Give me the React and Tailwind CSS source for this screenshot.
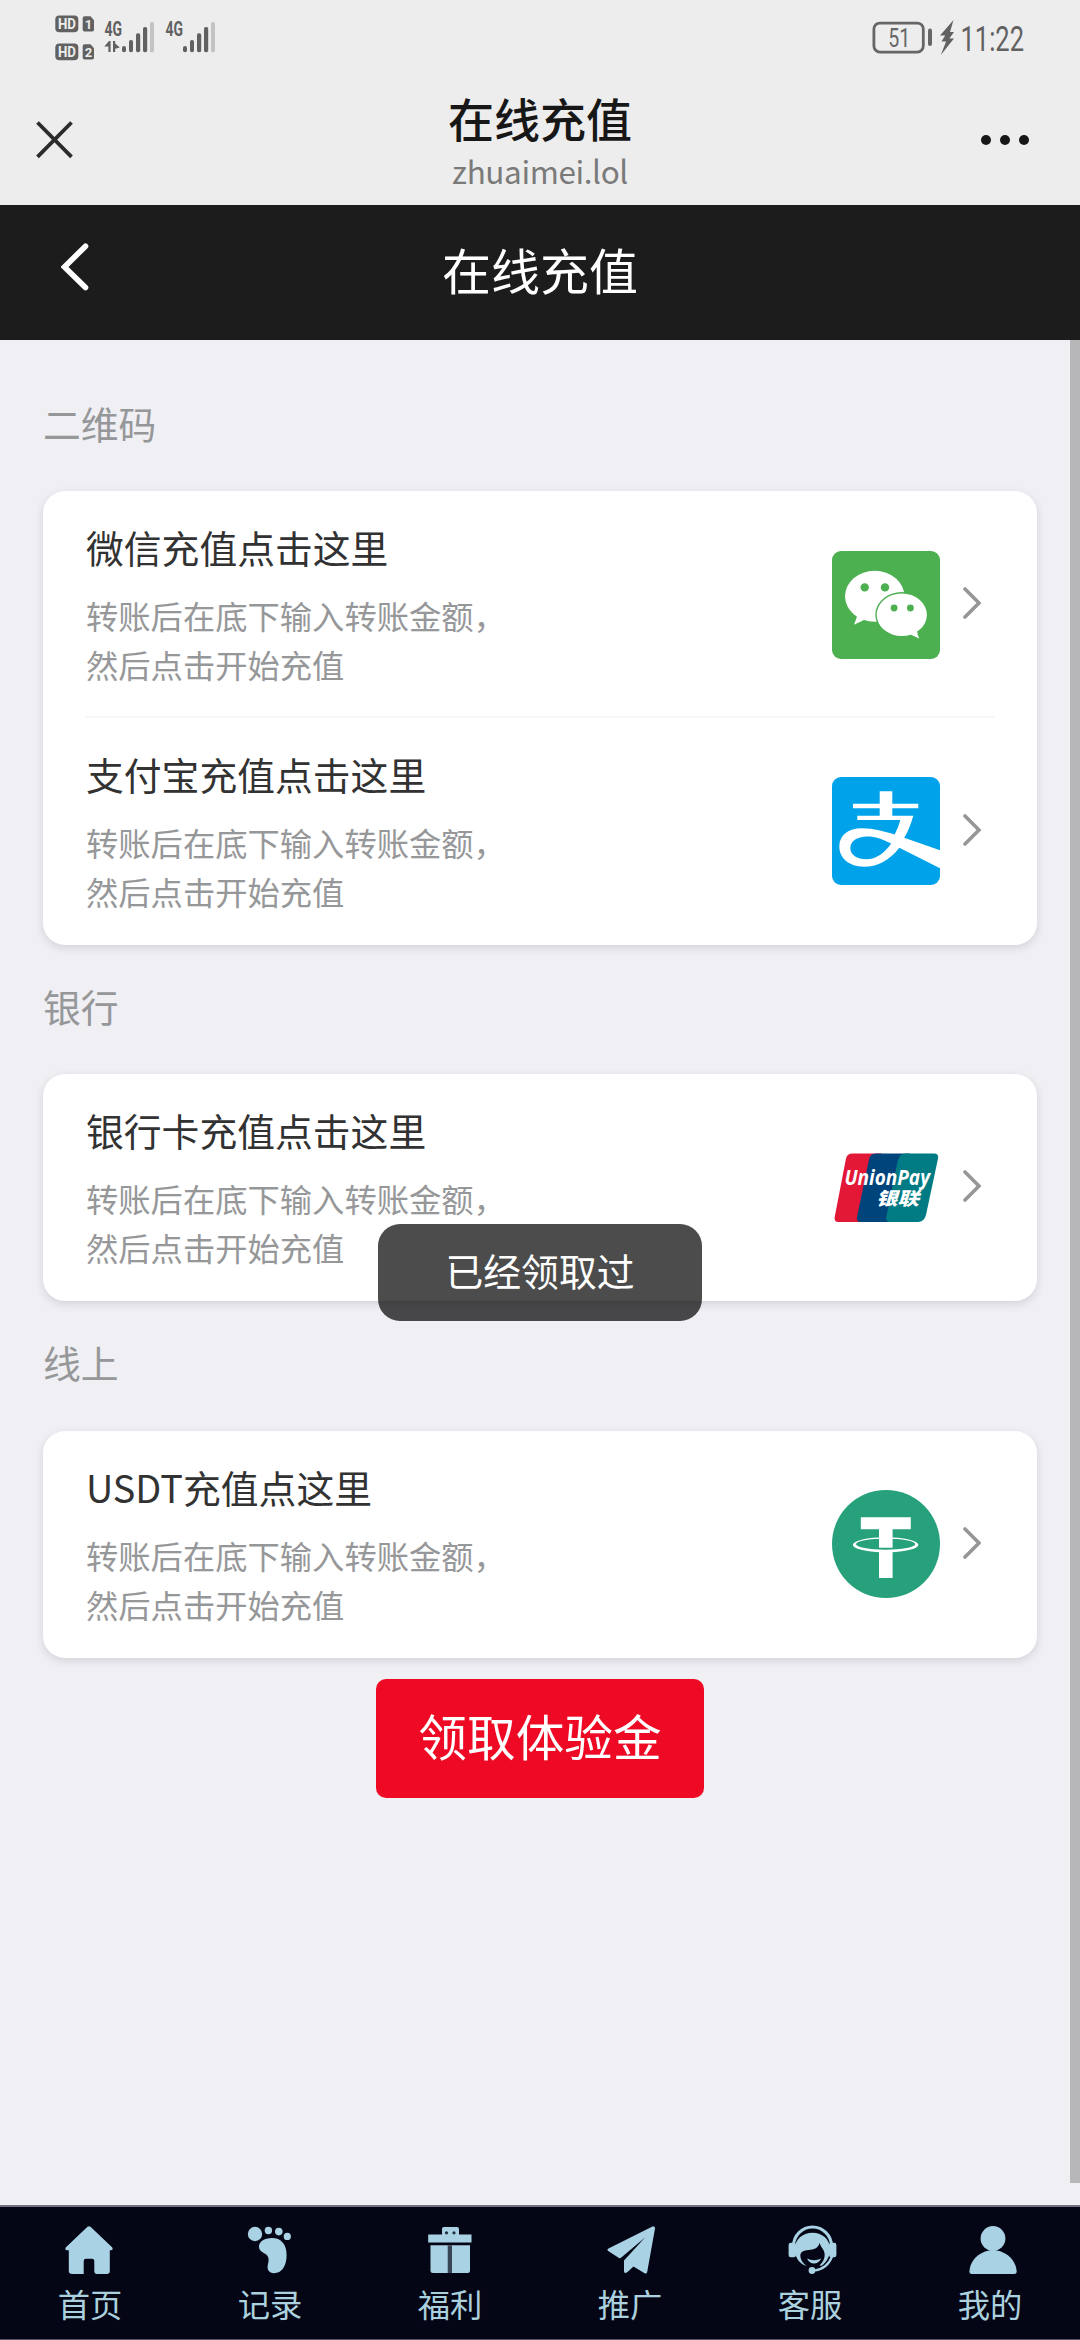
import React from "react";

const CJK = "font-['Noto_Sans_CJK_SC',sans-serif]";

function Signal({ data }) {
  return (
    <svg width="50" height="36" viewBox="0 0 50 36" className="block">
      <text x="0.5" y="17.5" fontSize="19.5" fontWeight="700" fontFamily="Roboto, sans-serif" fill="#616161" textLength="17.5" lengthAdjust="spacingAndGlyphs">4G</text>
      {data && (
        <path d="M6.6 23v11H4.4v-5.6H.3L5 23zM9 23h2.2v2.4l4.6 4-4.6 1.4V34H9z" fill="#616161" />
      )}
      <g fill="#616161">
        <rect x="18" y="28" width="4" height="6.3" rx="2" />
        <rect x="25" y="22" width="4" height="12.3" rx="1.8" />
        <rect x="32" y="15.3" width="4.2" height="19" rx="1.8" />
        <rect x="39" y="9" width="4.2" height="25.3" rx="1.8" />
        <rect x="46" y="4" width="4" height="30.3" rx="1.6" fill="#c3c3c3" />
      </g>
    </svg>
  );
}

function HdBadge({ n }) {
  return (
    <svg width="40" height="18" viewBox="0 0 40 18" className="block">
      <rect x="0.3" y="0.6" width="23" height="16.6" rx="4" fill="#616161" />
      <text x="3" y="14.3" fontSize="15" fontWeight="700" fontFamily="Roboto, sans-serif" fill="#ededed" textLength="18" lengthAdjust="spacingAndGlyphs">HD</text>
      <path d="M29.5 1.2h6l3.5 4v9.5a1.8 1.8 0 0 1-1.8 1.8h-7.7a1.8 1.8 0 0 1-1.8-1.8V3a1.8 1.8 0 0 1 1.8-1.8z" fill="#616161" />
      <text x="33.4" y="13.8" fontSize="13" fontWeight="700" textAnchor="middle" fontFamily="Roboto, sans-serif" fill="#ededed">{n}</text>
    </svg>
  );
}

function StatusBar() {
  return (
    <div className="flex h-[75px] items-start justify-between pl-[55px] pr-[50px]">
      <div className="flex">
        <div className="flex flex-col gap-[10px] pt-[15px]">
          <HdBadge n="1" />
          <HdBadge n="2" />
        </div>
        <div className="flex gap-[11px] pl-[9px] pt-[18px]">
          <Signal data />
          <Signal />
        </div>
      </div>
      <svg width="158" height="50" viewBox="0 0 158 50" className="mt-[17px] block overflow-visible">
        <rect x="1.9" y="6.1" width="49.4" height="29" rx="6" fill="none" stroke="#666" strokeWidth="2.8" />
        <rect x="56" y="11.5" width="4" height="17.5" rx="2" fill="#666" />
        <text x="16.3" y="30" fontSize="26" fontFamily="Roboto, sans-serif" fill="#666" textLength="22" lengthAdjust="spacingAndGlyphs">51</text>
        <path d="M81.5 3 68 18.5h5.2L69.5 24.5h4.6L68.8 38 82 21.5h-4.6L82 15h-4z" fill="#616161" />
        <text x="88.5" y="34.3" fontSize="35.5" fontFamily="Roboto, sans-serif" fill="#616161" textLength="63.5" lengthAdjust="spacingAndGlyphs">11:22</text>
      </svg>
    </div>
  );
}

function BrowserBar() {
  return (
    <div className="flex h-[130px] items-start justify-between pl-[36px] pr-[50px]">
      <svg width="38" height="38" viewBox="0 0 38 38" className="mt-[46px] block">
        <path d="M1.5 1.5 35.5 35.8M35.5 1.5 1.5 35.8" stroke="#2b2b2b" strokeWidth="3.8" />
      </svg>
      <div className="flex flex-col items-center pl-[26px]">
        <div className="mt-[15px] text-[46px] font-medium leading-[54px] text-[#171717]">在线充值</div>
        <div className="mt-[8px] text-[31.5px] leading-[36px] tracking-[-0.4px] text-[#7a7a7a]">zhuaimei.lol</div>
      </div>
      <svg width="50" height="12" viewBox="0 0 50 12" className="mt-[59px] block" fill="#171717">
        <circle cx="6" cy="6" r="5" />
        <circle cx="25" cy="6" r="5" />
        <circle cx="44" cy="6" r="5" />
      </svg>
    </div>
  );
}

function WechatIcon() {
  return (
    <svg width="108" height="108" viewBox="0 0 108 108" className="block">
      <rect width="108" height="108" rx="9" fill="#4caf50" />
      <g fill="#fff">
        <ellipse cx="42.7" cy="45.2" rx="29.7" ry="25.5" />
        <path d="M25.5 63Q24.5 68 22 73.8L32 69z" />
      </g>
      <ellipse cx="69.8" cy="63.8" rx="26.5" ry="22.8" fill="#4caf50" />
      <g fill="#fff">
        <ellipse cx="69.8" cy="63.8" rx="25.1" ry="21.3" />
        <path d="M85 79.5Q85.5 84 87.2 87.5L78.5 83.5z" />
      </g>
      <g fill="#4caf50">
        <circle cx="32.7" cy="36.4" r="4.2" />
        <circle cx="53" cy="36.4" r="4.2" />
        <circle cx="62.1" cy="57" r="3.4" />
        <circle cx="78.4" cy="57" r="3.4" />
      </g>
    </svg>
  );
}

function AlipayIcon() {
  return (
    <svg width="108" height="108" viewBox="0 0 108 108" className="block">
      <rect width="108" height="108" rx="9" fill="#00a3ea" />
      <path
        fill="#fff"
        fillRule="evenodd"
        d="M47.7 14.3H60.3V26.7H86.3V31.3H60.3V38.7H81.3C79 47 76 54.5 72.2 60.8L108 73.2V91.3L67.3 70.7C57 84 45 89.7 32 89.7C17 89.7 7.3 81 7.3 69.5C7.3 58.5 16 51.3 30 51.3C42 51.3 52 54.5 62.6 57.5C65 53 67 48 68.3 43H25.3V38.7H47.7V31.3H21V26.7H47.7ZM59.2 66.5C50 62 43 59.5 35.5 59.5C24.5 59.5 18.3 64.5 18.3 71C18.3 77.8 25 82.3 34.5 82.3C44 82.3 52.5 76 59.2 66.5Z"
      />
    </svg>
  );
}

function UnionPayIcon() {
  return (
    <svg width="108" height="108" viewBox="0 0 108 108" className="block">
      <g transform="translate(2 20)">
        <path d="M18.5 .5H48L34 69H4.5Q-.3 69 .7 64L12 5.5Q13.2 .5 18.5 .5z" fill="#e21836" />
        <path d="M43 .5H76L62 69H27Q22 69 23 64L35.2 5.5Q36.5 .5 43 .5z" fill="#00447c" />
        <path d="M71.5 .5H100Q105 .5 104 5.5L92 62Q90 69 84 69H56.5Q51.3 69 52.3 64L63.8 7.5Q65.5 .5 71.5 .5z" fill="#007b84" />
        <g fill="#fff" fontStyle="italic" fontWeight="700">
          <text x="10.5" y="32" fontSize="20.5" fontFamily="'Open Sans', sans-serif" textLength="85.5" lengthAdjust="spacingAndGlyphs">UnionPay</text>
          <text x="42" y="52" fontSize="18" fontWeight="900" fontFamily="'Noto Sans CJK SC', sans-serif" textLength="43" lengthAdjust="spacingAndGlyphs">银联</text>
        </g>
      </g>
    </svg>
  );
}

function TetherIcon() {
  return (
    <svg width="108" height="108" viewBox="0 0 108 108" className="block">
      <circle cx="54" cy="54" r="54" fill="#26a17b" />
      <path fill="#fff" fillRule="evenodd" d="M20.8 54.8A32.8 7.5 0 0 1 86.4 54.8A32.8 7.5 0 0 1 20.8 54.8ZM24 54.2A29.6 5.5 0 0 0 83.2 54.2A29.6 5.5 0 0 0 24 54.2Z" />
      <path fill="#fff" d="M28.8 27.3H78.8V39.3H60.6V57.7H47V39.3H28.8zM47 61H60.6V88H47z" />
    </svg>
  );
}

const ICONS = { wechat: WechatIcon, alipay: AlipayIcon, union: UnionPayIcon, usdt: TetherIcon };

function Row({ title, icon, divider }) {
  const Icon = ICONS[icon];
  return (
    <div className={divider ? "flex h-[227px] items-start border-b-2 border-[#f5f6f7]" : "flex h-[227px] items-start"}>
      <div className="flex-1 pt-[31px]">
        <div className="text-[37.8px] leading-[49px] text-[#323233]">{title}</div>
        <div className="mt-[20px] text-[32.3px] leading-[49px] text-[#969799]">
          转账后在底下输入转账金额，
          <br />
          然后点击开始充值
        </div>
      </div>
      <div className={divider ? "mt-[60px]" : "mt-[59px]"}>
        <Icon />
      </div>
      <svg width="18" height="34" viewBox="0 0 18 34" className="ml-[23px] mr-[13px] mt-[95px] block">
        <path d="M2 3 16 17 2 31" fill="none" stroke="#969696" strokeWidth="3.6" strokeLinecap="round" />
      </svg>
    </div>
  );
}

function Section({ label, rows, labelBox }) {
  return (
    <section>
      <div className={`flex items-center text-[37.8px] leading-[48px] text-[#969799] ${labelBox}`}>{label}</div>
      <div className="rounded-[22px] bg-white px-[43px] shadow-[0_3px_8px_rgba(100,101,110,0.2)]">
        {rows.map((r, i) => (
          <Row key={r.title} title={r.title} icon={r.icon} divider={i < rows.length - 1} />
        ))}
      </div>
    </section>
  );
}

const SECTIONS = [
  { label: "二维码", labelBox: "h-[151px] pt-[15px]", rows: [{ title: "微信充值点击这里", icon: "wechat" }, { title: "支付宝充值点击这里", icon: "alipay" }] },
  { label: "银行", labelBox: "h-[129px] pb-[8px]", rows: [{ title: "银行卡充值点击这里", icon: "union" }] },
  { label: "线上", labelBox: "h-[130px] pb-[8px]", rows: [{ title: "USDT充值点这里", icon: "usdt" }] },
];

const NAV = [
  {
    label: "首页",
    nudge: "mr-[3px]",
    art: <path d="M22.5 .8Q24 -.3 25.5 .8L47.3 21.5Q48.5 24.3 45.8 24.3H44.8V45Q44.8 48 41.8 48H32Q29.3 48 29.3 45V35Q29.3 32.7 27 32.7H21Q18.7 32.7 18.7 35V48H7.5Q3.8 48 3.8 45V24.3H2Q-.5 24.3 .7 21.5z" />,
  },
  {
    label: "记录",
    nudge: "",
    art: (
      <>
        <circle cx="9" cy="8" r="7.2" />
        <circle cx="22.4" cy="4.5" r="3.7" />
        <circle cx="32.8" cy="5.6" r="3.8" />
        <circle cx="41.3" cy="10.4" r="3.6" />
        <path d="M26 12C35 12 40.6 18 40.6 29C40.6 40 36 47.2 28 47.2C23 47.2 20.8 43.5 21.8 39C23 34 23.5 30.5 19 27.7C15.5 25.5 13 24.5 13 20.5C13 16 18 12 26 12z" />
      </>
    ),
  },
  {
    label: "福利",
    nudge: "",
    art: (
      <>
        <path d="M18 1h13q2 0 2 2v5.5h12.5v8H2.2v-8H16V3q0-2 2-2z" />
        <path d="M4.5 19.3H44V44.5Q44 47 41.5 47H7Q4.5 47 4.5 44.5z" />
        <path d="M21.7 19.3h4.3V47h-4.3z" fill="#374554" />
        <circle cx="20.5" cy="6.8" r="1.6" fill="#203040" />
        <circle cx="28" cy="6.8" r="1.6" fill="#203040" />
      </>
    ),
  },
  {
    label: "推广",
    nudge: "ml-[1px]",
    art: (
      <path d="M45.5 .6Q48.3 -.3 48 2.5L40.2 46Q39.6 48.5 37.2 47L26.5 40.5 20.2 46.3Q17 48 17 45V34.5L38 11.5 14 31.8Q13 32.5 12 31.9L1.2 25Q-.5 23.5 1.5 22.5z" />
    ),
  },
  {
    label: "客服",
    nudge: "ml-[3px]",
    art: (
      <>
        <path d="M5.5 20A19 19 0 0 1 43.5 20" fill="none" stroke="#a9d3e4" strokeWidth="3" />
        <rect x=".6" y="16.8" width="7.4" height="14.5" rx="2.2" />
        <rect x="41" y="16.8" width="7.4" height="14.5" rx="2.2" />
        <path d="M24.5 6.8C34.5 6.8 42 13.5 42 23.5C42 30.5 38.5 36.5 33.5 39.8L31.5 39.5C35.5 36 37.5 31 36.3 26.3C35.5 23 33 21.5 31.5 16.8C30.5 21.5 27.5 23.2 22.5 23.7C17 24.3 13.5 24.7 12.4 28.5C12 33 14.5 37 18.5 40C11 37.5 6.8 31 6.8 23.5C6.8 13.5 14.5 6.8 24.5 6.8z" />
        <path d="M19 32.5Q26 36 33.2 32.5Q30.5 37.5 26 37.5T19 32.5z" />
        <path d="M44.3 30Q39 43.5 26 44.5" fill="none" stroke="#a9d3e4" strokeWidth="2.2" />
        <circle cx="24" cy="44.5" r="3.4" />
      </>
    ),
  },
  {
    label: "我的",
    nudge: "ml-[6px]",
    art: (
      <>
        <circle cx="24" cy="12.5" r="12.4" />
        <path d="M16 25.5Q24 22.5 32 25.5C42 29.5 47 37 47.7 45.5Q47.7 48 45 48H3Q.4 48 .4 45.5C1 37 6 29.5 16 25.5z" />
      </>
    ),
  },
];

function NavBar() {
  return (
    <nav className="grid h-[135px] grid-cols-6 border-b border-t-2 border-b-[#55555f] border-t-[#72727e] bg-[#040615]">
      {NAV.map((n) => (
        <div key={n.label} className="flex flex-col items-center pt-[19px]">
          <div className={n.nudge}>
            <svg width="48" height="48" viewBox="0 0 48 48" className="block overflow-visible" fill="#a9d3e4">
              {n.art}
            </svg>
          </div>
          <div className="mt-[9px] text-[32.3px] leading-[40px] text-[#abd0de]">{n.label}</div>
        </div>
      ))}
    </nav>
  );
}

export default function App() {
  return (
    <div className={`relative flex h-[2340px] w-[1080px] flex-col overflow-hidden bg-[#efeff4] ${CJK}`}>
      <div className="h-[205px] bg-[#ededed]">
        <StatusBar />
        <BrowserBar />
      </div>
      <header className="flex h-[135px] items-center justify-between bg-[#1c1c1c] pl-[61px] pr-[61px]">
        <svg width="28" height="48" viewBox="0 0 28 48" className="mb-[12px] block">
          <path d="M24.5 3.2 3.5 24 24.5 44.5" fill="none" stroke="#fff" strokeWidth="5.6" strokeLinecap="round" />
        </svg>
        <h1 className="pb-[8px] text-[48.96px] leading-[60px] text-white">在线充值</h1>
        <div className="w-[28px]" />
      </header>
      <main className="flex flex-1 justify-between">
        <div className="flex flex-1 flex-col pl-[43px] pr-[33px]">
          {SECTIONS.map((s) => (
            <Section key={s.label} label={s.label} rows={s.rows} labelBox={s.labelBox} />
          ))}
          <button className="ml-[333px] mt-[21px] h-[119px] w-[328px] rounded-[10px] bg-[#ee0a24] pb-[8px] text-[48.7px] leading-[60px] text-white">
            领取体验金
          </button>
        </div>
        <div className="h-[1843px] w-[10px] bg-[#b7b7b9]" />
      </main>
      <NavBar />
      <div className="absolute left-[378px] top-[1224px] flex h-[97px] w-[324px] items-center justify-center rounded-[22px] bg-black/70 pb-[6px] text-[37.8px] leading-[52px] text-white">
        已经领取过
      </div>
    </div>
  );
}
